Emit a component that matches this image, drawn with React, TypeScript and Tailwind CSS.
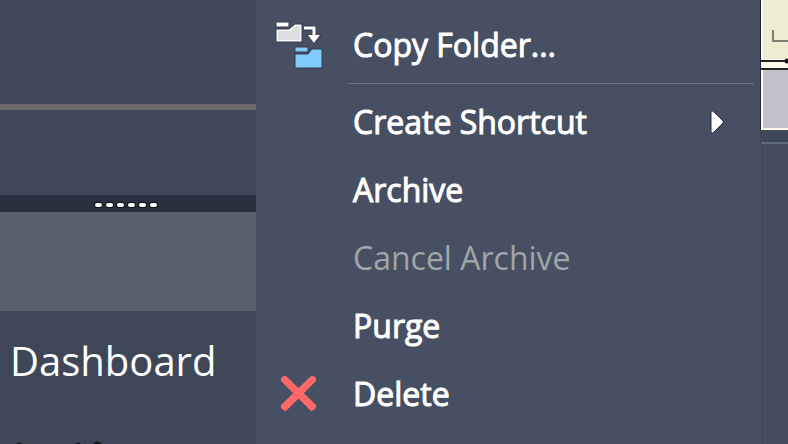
import { type ReactNode } from "react"

type MenuItem = {
  label: string
  icon?: ReactNode
  disabled?: boolean
  submenu?: boolean
  separatorAfter?: boolean
}

const CopyFolderIcon = () => (
  <svg className="h-12 w-12" viewBox="0 0 48 48" aria-hidden="true">
    <g stroke="#343c4d" strokeWidth="1" strokeLinejoin="round">
      <path d="M1 1h13v5H1z" fill="#fafafa" />
      <path d="M1 8h13l6-5h7v18H1z" fill="#f8f8f8" />
      <path d="M20 26h13v5H20z" fill="#82cbff" />
      <path d="M20 33h13l4-5h10v19H20z" fill="#82cbff" />
    </g>
    <path d="M3 10h12l6-5h4v14H3z" fill="#dedde0" />
    <path d="M29 7h10v8" fill="none" stroke="#343c4d" strokeWidth="5" />
    <path d="M32 14h15l-7.500 9z" fill="#343c4d" />
    <path d="M29 7h10v8" fill="none" stroke="#fff" strokeWidth="3" />
    <path d="M33 14h12l-6 8z" fill="#fff" />
  </svg>
)

const DeleteIcon = () => (
  <svg className="h-12 w-12" viewBox="0 0 48 48" aria-hidden="true">
    <g fill="#ff6868">
      <path d="M6 9q0-2 3-3h2l30 29q1 2-1 4t-4 2L6 11z" />
      <path d="M41 9q0-2-3-3h-2L6 35q-1 2 1 4t4 2l30-30z" />
    </g>
  </svg>
)

const MENU_ITEMS: MenuItem[] = [
  { label: "Copy Folder...", icon: <CopyFolderIcon />, separatorAfter: true },
  { label: "Create Shortcut", submenu: true },
  { label: "Archive" },
  { label: "Cancel Archive", disabled: true },
  { label: "Purge" },
  { label: "Delete", icon: <DeleteIcon /> },
]

const MenuRow = ({ label, icon, disabled, submenu }: MenuItem) => (
  <button
    type="button"
    role="menuitem"
    disabled={disabled}
    className="flex h-[68px] w-full items-center pr-9 pl-[19px] text-left text-[32px] leading-10 text-white [-webkit-text-stroke:1px] disabled:text-[#9fa6a9] disabled:[-webkit-text-stroke:0px]"
  >
    <span className="mr-[30px] w-12 shrink-0">{icon}</span>
    <span className="flex-1 whitespace-nowrap">{label}</span>
    {submenu && (
      <svg className="h-6 w-[14px] shrink-0" viewBox="0 0 14 24" aria-hidden="true">
        <path d="M1 2q1-2 3 0l9 9q1 1 0 2l-9 9q-2 2-3 0z" fill="#fff" stroke="#272d3b" strokeWidth="1" />
      </svg>
    )}
  </button>
)

const ContextMenu = () => (
  <div role="menu" className="min-w-0 flex-1 bg-[#475062] pt-[11px]">
    {MENU_ITEMS.map((item) => (
      <div key={item.label}>
        <MenuRow {...item} />
        {item.separatorAfter && (
          <div role="separator" className="mr-[6px] ml-[91px] py-[4px]">
            <div className="h-px bg-[#687284]" />
          </div>
        )}
      </div>
    ))}
  </div>
)

const SidePanel = () => (
  <aside className="flex w-64 shrink-0 flex-col bg-[#3e4657]">
    <div className="h-[104px] shrink-0" />
    <div className="h-[6px] shrink-0 bg-[#6d6a69]" />
    <div className="h-[85px] shrink-0" />
    <div className="flex h-[17px] shrink-0 items-center justify-center gap-[4px] bg-[#2a303f] pt-[2px] pr-1">
      {Array.from({ length: 6 }, (_, i) => (
        <span key={i} className="h-1 w-[7px] rounded-full bg-white ring-1 ring-[#10141f]" />
      ))}
    </div>
    <div className="h-[99px] shrink-0 bg-[#5a606e]" />
    <h2 className="px-[10px] pt-[26px] text-[40px] leading-[48px] text-white">Dashboard</h2>
    {/* tops of the next row, cut off by the window edge */}
    <svg className="mt-auto h-[3px] w-32 shrink-0" viewBox="0 0 128 3" aria-hidden="true">
      <path d="M16 3q3-3 6 0zM75 3q3-3 6 0zM93 3q4-5 9 0z" fill="#10131b" />
    </svg>
  </aside>
)

// sliver of the drawing view left visible beside the menu
const DrawingView = () => (
  <div className="flex w-7 shrink-0 flex-col bg-[#454e60]">
    <svg className="h-[144px] w-7" viewBox="0 0 28 144" aria-hidden="true">
      <path d="M0 0h28v130H0z" fill="#202638" />
      <path d="M1 0h27v130H1z" fill="#fff9ee" />
      <path d="M3 0h25v59H3z" fill="#eeedd4" />
      <path d="M1 61h27M1 69h27" stroke="#252324" strokeWidth="2" />
      <circle cx="27" cy="61" r="2.500" fill="#17171b" />
      <path d="M13 30v11h15" fill="none" stroke="#7c8272" strokeWidth="2" />
      <path d="M3 70h25v58H3z" fill="#c1c2c9" />
      <path d="M0 130h28v14H0z" fill="#3f4859" />
      <path d="M1 143h27" stroke="#5b6b7c" strokeWidth="2" />
    </svg>
    <div className="ml-[2px] flex-1 border-l border-[#3d4557]" />
  </div>
)

const App = () => (
  <main className="flex h-screen overflow-hidden bg-[#3e4657] font-['Open_Sans','Noto_Sans',sans-serif]">
    <SidePanel />
    <ContextMenu />
    <DrawingView />
  </main>
)

export default App
